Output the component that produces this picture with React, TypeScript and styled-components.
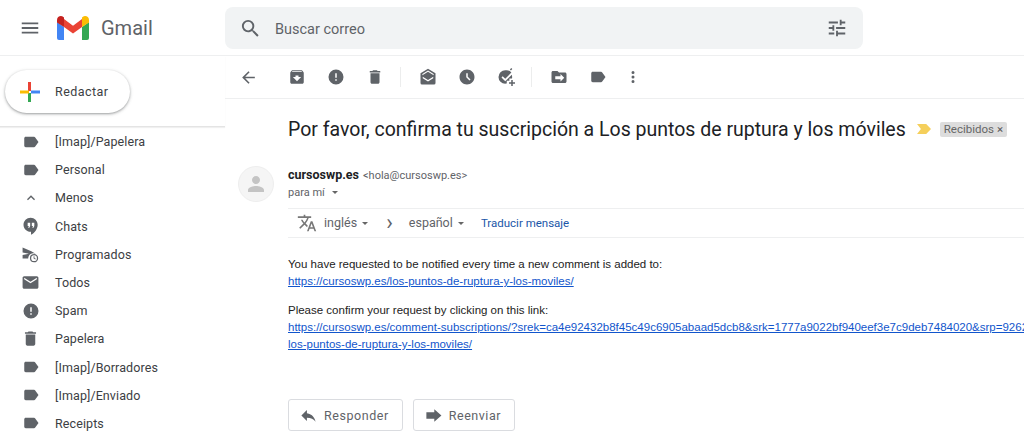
import React from 'react';
import styled, { createGlobalStyle } from 'styled-components';

const GlobalStyle = createGlobalStyle`
  html, body {
    margin: 0;
    padding: 0;
    background: #fff;
    overflow: hidden;
  }
  body {
    font-family: Roboto, "Liberation Sans", sans-serif;
  }
`;

const ICONS = {
  menu: 'M3 18h18v-2H3v2zm0-5h18v-2H3v2zm0-7v2h18V6H3z',
  search:
    'M15.5 14h-.79l-.28-.27A6.471 6.471 0 0 0 16 9.5 6.5 6.5 0 1 0 9.5 16c1.61 0 3.09-.59 4.23-1.57l.27.28v.79l5 4.99L20.49 19l-4.99-5zm-6 0C7.01 14 5 11.99 5 9.5S7.01 5 9.5 5 14 7.01 14 9.5 11.99 14 9.5 14z',
  tune: 'M3 17v2h6v-2H3zM3 5v2h10V5H3zm10 16v-2h8v-2h-8v-2h-2v6h2zM7 9v2H3v2h4v2h2V9H7zm14 4v-2H11v2h10zm-6-4h2V7h4V5h-4V3h-2v6z',
  label:
    'M17.63 5.84C17.27 5.33 16.67 5 16 5L5 5.01C3.9 5.01 3 5.9 3 7v10c0 1.1.9 1.99 2 1.99L16 19c.67 0 1.27-.33 1.63-.84L22 12l-4.37-6.16z',
  less: 'M12 8l-6 6 1.41 1.41L12 10.83l4.59 4.58L18 14z',
  chat: 'M11.5 2C6.81 2 3 5.81 3 10.5S6.81 19 11.5 19h.5v3.5c4.86-2.34 8-7.5 8-12C20 5.81 16.19 2 11.5 2zM11 12l-1 2H8.5l1-2H8V8h3v4zm5 0l-1 2h-1.5l1-2H13V8h3v4z',
  scheduled:
    'M2 3l11 5 5.5 3a6.5 6.5 0 0 0-9.4 6H2v-4.5l8-1.5-8-1.5V3zm14.5 8.5a5.2 5.2 0 1 1 0 10.4 5.2 5.2 0 0 1 0-10.4zm0 1.6a3.6 3.6 0 1 0 0 7.2 3.6 3.6 0 0 0 0-7.2zm-.6 1h1.1v2.2l1.7 1-.6.9-2.2-1.3v-2.8z',
  email:
    'M20 4H4c-1.1 0-2 .9-2 2v12c0 1.1.9 2 2 2h16c1.1 0 2-.9 2-2V6c0-1.1-.9-2-2-2zm0 4l-8 5-8-5V6l8 5 8-5v2z',
  report: 'M12 2a10 10 0 1 0 0 20 10 10 0 0 0 0-20zm1 15h-2v-2h2v2zm0-4h-2V7h2v6z',
  trash: 'M6 19c0 1.1.9 2 2 2h8c1.1 0 2-.9 2-2V7H6v12zM19 4h-3.5l-1-1h-5l-1 1H5v2h14V4z',
  back: 'M20 11H7.83l5.59-5.59L12 4l-8 8 8 8 1.41-1.41L7.83 13H20v-2z',
  archive:
    'M20.54 5.23l-1.39-1.68C18.88 3.21 18.47 3 18 3H6c-.47 0-.88.21-1.16.55L3.46 5.23C3.17 5.57 3 6.02 3 6.5V19c0 1.1.9 2 2 2h14c1.1 0 2-.9 2-2V6.5c0-.48-.17-.93-.46-1.27zM12 17.5L6.5 12H10v-2h4v2h3.5L12 17.5zM5.12 5l.81-1h12l.94 1H5.12z',
  unread:
    'M12 1L2 7v13a2 2 0 0 0 2 2h16a2 2 0 0 0 2-2V7L12 1zM12 3.4L4.5 7.9v1.7L12 5.1l7.5 4.5V7.9L12 3.4zM5 11.5v2l7 4.5 7-4.5v-2L12 16l-7-4.5z',
  clock:
    'M11.99 2C6.47 2 2 6.48 2 12s4.47 10 9.99 10C17.52 22 22 17.52 22 12S17.52 2 11.99 2zm3.3 14.71L11 12.41V7h2v4.59l3.71 3.71-1.42 1.41z',
  addTask:
    'M11 3a9 9 0 1 0 0 18c.7 0 1.4-.1 2-.2V17h3.5v-3H20c.1-.6.2-1.3.2-2 0-1-.2-2-.5-3l-8.7 8.5L6 12.6l1.6-1.6 3.4 3.3 8.2-8.3A9 9 0 0 0 11 3zm8-3l1.4 1.2-1.8 2-1.4-1.2L19 0zM19 16h2v3h3v2h-3v3h-2v-3h-3v-2h3v-3z',
  move: 'M20 6h-8l-2-2H4c-1.1 0-1.99.9-1.99 2L2 18c0 1.1.9 2 2 2h16c1.1 0 2-.9 2-2V8c0-1.1-.9-2-2-2zm-6 12v-3H7v-4h7V8l5 5-5 5z',
  translate:
    'M12.87 15.07l-2.54-2.51.03-.03c1.74-1.94 2.98-4.17 3.71-6.53H17V4h-7V2H8v2H1v1.99h11.17C11.5 7.92 10.44 9.75 9 11.35 8.07 10.32 7.3 9.19 6.69 8h-2c.73 1.63 1.73 3.17 2.98 4.56l-5.09 5.02L4 19l5-5 3.11 3.11.76-2.04zM18.5 10h-2L12 22h2l1.12-3h4.75L21 22h2l-4.5-12zm-2.62 7l1.62-4.33L19.12 17h-3.24z',
  reply: 'M10 9V5l-7 7 7 7v-4.1c5 0 8.5 1.6 11 5.1-1-5-4-10-11-11z',
  forward: 'M13 8V4l9 8-9 8v-4H3V8z',
  person:
    'M12 12c2.21 0 4-1.79 4-4s-1.79-4-4-4-4 1.79-4 4 1.79 4 4 4zm0 2c-2.67 0-8 1.34-8 4v2h16v-2c0-2.66-5.33-4-8-4z',
  dots: 'M12 8a2 2 0 1 0 0-4 2 2 0 0 0 0 4zm0 2a2 2 0 1 0 0 4 2 2 0 0 0 0-4zm0 6a2 2 0 1 0 0 4 2 2 0 0 0 0-4z',
};

type IconName = keyof typeof ICONS;

const Icon: React.FC<{ name: IconName; size?: number; color?: string; className?: string }> = ({
  name,
  size = 20,
  color = '#5f6368',
  className,
}) => (
  <svg className={className} width={size} height={size} viewBox="0 0 24 24" fill={color}>
    <path fillRule="evenodd" d={ICONS[name]} />
  </svg>
);

const MAILBOXES: Array<{ label: string; icon: IconName; size?: number }> = [
  { label: '[Imap]/Papelera', icon: 'label', size: 18 },
  { label: 'Personal', icon: 'label', size: 18 },
  { label: 'Menos', icon: 'less', size: 16 },
  { label: 'Chats', icon: 'chat', size: 20 },
  { label: 'Programados', icon: 'scheduled', size: 19 },
  { label: 'Todos', icon: 'email', size: 19 },
  { label: 'Spam', icon: 'report', size: 18 },
  { label: 'Papelera', icon: 'trash', size: 19 },
  { label: '[Imap]/Borradores', icon: 'label', size: 18 },
  { label: '[Imap]/Enviado', icon: 'label', size: 18 },
  { label: 'Receipts', icon: 'label', size: 18 },
];

const TOOL_GROUPS: IconName[][] = [
  ['archive', 'report', 'trash'],
  ['unread', 'clock', 'addTask'],
  ['move', 'label', 'dots'],
];

const App: React.FC = () => (
  <Page>
    <GlobalStyle />
    <TopBar>
      <Brand>
        <Icon name="menu" size={22} />
        <GmailMark width="32" height="24" viewBox="0 0 32 24">
          <path fill="#4285f4" d="M0 6v16a2 2 0 0 0 2 2h5V11z" />
          <path fill="#34a853" d="M25 11v13h5a2 2 0 0 0 2-2V6z" />
          <path fill="#ea4335" d="M7 11V3l9 6.8L25 3v8l-9 6.6z" />
          <path fill="#c5221f" d="M0 6.5V4c0-3.4 3.8-5 6.4-3L7 1.5V11z" />
          <path fill="#fbbc04" d="M25 1.5l.6-.5C28.2-1 32 .6 32 4v2.5L25 11z" />
        </GmailMark>
        <GmailName>Gmail</GmailName>
      </Brand>
      <SearchBox>
        <Icon name="search" size={23} />
        <SearchText>Buscar correo</SearchText>
        <Icon name="tune" size={22} />
      </SearchBox>
    </TopBar>
    <Body>
      <Sidebar>
        <ComposeArea>
          <ComposeButton>
            <svg width="24" height="24" viewBox="0 0 24 24">
              <path fill="#ea4335" d="M10 2h3v9h-3z" />
              <path fill="#4285f4" d="M13 10.5h9v3h-9z" />
              <path fill="#34a853" d="M10 13h3v9h-3z" />
              <path fill="#fbbc04" d="M2 10.5h9v3H2z" />
            </svg>
            Redactar
          </ComposeButton>
        </ComposeArea>
        <MailboxList>
          {MAILBOXES.map(box => (
            <MailboxRow key={box.label}>
              <MailboxIcon>
                <Icon name={box.icon} size={box.size} />
              </MailboxIcon>
              <MailboxName>{box.label}</MailboxName>
            </MailboxRow>
          ))}
        </MailboxList>
      </Sidebar>
      <Content>
        <Toolbar>
          <BackSlot>
            <Icon name="back" size={19} />
          </BackSlot>
          {TOOL_GROUPS.map((group, i) => (
            <ToolGroup key={i} $last={i === TOOL_GROUPS.length - 1}>
              {group.map(name => (
                <ToolSlot key={name}>
                  <Icon name={name} size={18} />
                </ToolSlot>
              ))}
            </ToolGroup>
          ))}
        </Toolbar>
        <SubjectRow>
          <Subject>Por favor, confirma tu suscripción a Los puntos de ruptura y los móviles</Subject>
          <ImportantMark width="14" height="10" viewBox="0 0 16 10" preserveAspectRatio="none">
            <path fill="#f5cf5b" d="M0 0h10.5L16 5l-5.5 5H0l4.5-5z" />
          </ImportantMark>
          <InboxChip>
            Recibidos <ChipClose>×</ChipClose>
          </InboxChip>
        </SubjectRow>
        <Message>
          <Avatar>
            <Icon name="person" size={24} color="#c4c4c4" />
          </Avatar>
          <MessageBody>
            <SenderLine>
              <SenderName>cursoswp.es</SenderName>
              <SenderMail>&lt;hola@cursoswp.es&gt;</SenderMail>
            </SenderLine>
            <ToLine>
              para mí <Caret />
            </ToLine>
            <TranslateBar>
              <Icon name="translate" size={20} color="#777" />
              <Lang>
                inglés <Caret />
              </Lang>
              <Chevron>›</Chevron>
              <Lang>
                español <Caret />
              </Lang>
              <TranslateLink>Traducir mensaje</TranslateLink>
            </TranslateBar>
            <Mail>
              <MailBlock>
                <MailLine>You have requested to be notified every time a new comment is added to:</MailLine>
                <MailLink>https://cursoswp.es/los-puntos-de-ruptura-y-los-moviles/</MailLink>
              </MailBlock>
              <MailBlock>
                <MailLine>Please confirm your request by clicking on this link:</MailLine>
                <MailLink>
                  https://cursoswp.es/comment-subscriptions/?srek=ca4e92432b8f45c49c6905abaad5dcb8&amp;srk=1777a9022bf940eef3e7c9deb7484020&amp;srp=9262
                </MailLink>
                <MailLink>los-puntos-de-ruptura-y-los-moviles/</MailLink>
              </MailBlock>
            </Mail>
            <Actions>
              <ActionButton>
                <Icon name="reply" size={19} />
                Responder
              </ActionButton>
              <ActionButton>
                <Icon name="forward" size={19} />
                Reenviar
              </ActionButton>
            </Actions>
          </MessageBody>
        </Message>
      </Content>
    </Body>
  </Page>
);

export default App;

const Page = styled.div`
  width: 1024px;
  height: 442px;
  overflow: hidden;
  display: flex;
  flex-direction: column;
  background: #fff;
`;

const TopBar = styled.header`
  flex: none;
  height: 56px;
  box-sizing: border-box;
  display: flex;
  align-items: flex-start;
  border-bottom: 1px solid #eeeff0;
`;

const Brand = styled.div`
  width: 225px;
  height: 55px;
  display: flex;
  align-items: center;
  padding-left: 19px;
  box-sizing: border-box;
`;

const GmailMark = styled.svg`
  margin-left: 16px;
`;

const GmailName = styled.span`
  margin-left: 12px;
  font-size: 20px;
  color: #5f6368;
`;

const SearchBox = styled.div`
  margin-top: 7px;
  width: 638px;
  height: 42px;
  box-sizing: border-box;
  display: flex;
  align-items: center;
  padding: 0 15px 0 14px;
  border-radius: 8px;
  background: #f1f3f4;
`;

const SearchText = styled.span`
  margin-left: 13px;
  margin-top: 2px;
  flex: 1;
  font-size: 14.5px;
  color: #5f6368;
`;

const Body = styled.div`
  flex: 1;
  display: flex;
  min-height: 0;
`;

const Sidebar = styled.nav`
  flex: none;
  width: 225px;
`;

const ComposeArea = styled.div`
  height: 71px;
  box-sizing: border-box;
  padding: 14px 0 0 5px;
  border-bottom: 1px solid #e4e4e4;
  box-shadow: 0 1px 1px rgba(0, 0, 0, 0.06);
`;

const ComposeButton = styled.div`
  width: 125px;
  height: 43px;
  box-sizing: border-box;
  display: flex;
  align-items: center;
  gap: 13px;
  padding-left: 13px;
  border-radius: 22px;
  background: #fff;
  font-size: 12.5px;
  letter-spacing: 0.45px;
  color: #3c4043;
  box-shadow: 0 1px 2px rgba(60, 64, 67, 0.35), 0 1px 3px 1px rgba(60, 64, 67, 0.15);
`;

const MailboxList = styled.div`
  margin-top: 0.5px;
`;

const MailboxRow = styled.div`
  height: 28.2px;
  display: flex;
  align-items: center;
  color: #3c4043;
`;

const MailboxIcon = styled.span`
  width: 55px;
  flex: none;
  display: flex;
  justify-content: center;
  box-sizing: border-box;
  padding-left: 6px;
`;

const MailboxName = styled.span`
  font-size: 12.5px;
  letter-spacing: 0.1px;
`;

const Content = styled.main`
  flex: 1;
  min-width: 0;
`;

const Toolbar = styled.div`
  height: 43px;
  box-sizing: border-box;
  display: flex;
  align-items: center;
  border-bottom: 1px solid #eeeff0;
  padding-left: 14px;
`;

const BackSlot = styled.span`
  width: 19px;
  display: flex;
  margin-right: 19px;
`;

const ToolGroup = styled.div<{ $last: boolean }>`
  display: flex;
  align-items: center;
  height: 20px;
  padding-right: 6px;
  margin-right: 7px;
  border-right: ${({ $last }) => ($last ? 'none' : '1px solid #eceded')};

  ${({ $last }) => ($last ? '& > :last-child { margin-left: -4px; }' : '')}
`;

const ToolSlot = styled.span`
  width: 39px;
  display: flex;
  justify-content: center;
`;

const SubjectRow = styled.div`
  display: flex;
  align-items: center;
  height: 60px;
  padding-left: 63px;
`;

const Subject = styled.h1`
  margin: 0;
  font-size: 19.5px;
  font-weight: 400;
  color: #202124;
  white-space: nowrap;
`;

const ImportantMark = styled.svg`
  margin-left: 11px;
`;

const InboxChip = styled.span`
  margin-left: 9px;
  padding: 0 4px;
  height: 15px;
  line-height: 15px;
  border-radius: 2px;
  background: #ddd;
  color: #666;
  font-size: 11.5px;
  white-space: nowrap;
`;

const ChipClose = styled.span`
  color: #555;
`;

const Message = styled.section`
  display: flex;
  padding: 7px 0 0 13px;
`;

const Avatar = styled.div`
  flex: none;
  width: 36px;
  height: 36px;
  border-radius: 50%;
  background: #f5f5f5;
  border: 1px solid #eee;
  box-sizing: border-box;
  display: flex;
  align-items: center;
  justify-content: center;
`;

const MessageBody = styled.div`
  flex: none;
  width: 736px;
  margin-left: 14px;
  margin-top: 1px;
`;

const SenderLine = styled.div`
  display: flex;
  align-items: baseline;
  gap: 4px;
  height: 17px;
`;

const SenderName = styled.span`
  font-size: 12.5px;
  font-weight: 700;
  color: #202124;
`;

const SenderMail = styled.span`
  font-size: 11px;
  color: #5f6368;
`;

const ToLine = styled.div`
  display: flex;
  align-items: center;
  gap: 5px;
  height: 17px;
  font-size: 11px;
  color: #5f6368;
`;

const Caret = styled.i`
  display: inline-block;
  width: 0;
  height: 0;
  margin-left: 2px;
  vertical-align: middle;
  border-left: 3.5px solid transparent;
  border-right: 3.5px solid transparent;
  border-top: 3.5px solid #666;
`;

const TranslateBar = styled.div`
  margin-top: 7px;
  height: 30px;
  box-sizing: border-box;
  display: flex;
  align-items: center;
  padding-left: 9px;
  border-top: 1px solid #eeeff0;
  border-bottom: 1px solid #eeeff0;
`;

const Lang = styled.span`
  margin-left: 7px;
  margin-bottom: 2px;
  font-size: 12.5px;
  color: #5f6368;
`;

const Chevron = styled.span`
  margin-left: 18px;
  margin-right: 9px;
  font-size: 22px;
  line-height: 18px;
  color: #5f6368;
`;

const TranslateLink = styled.span`
  margin-left: 17px;
  font-size: 11.5px;
  color: #1a56a8;
`;

const Mail = styled.div`
  padding-top: 18px;
  font-family: 'Liberation Sans', Arial, sans-serif;
  font-size: 11.5px;
  line-height: 17px;
  color: #222;
`;

const MailBlock = styled.div`
  margin-bottom: 12px;
`;

const MailLine = styled.div`
  white-space: nowrap;
`;

const MailLink = styled.div`
  white-space: nowrap;
  color: #1155cc;
  text-decoration: underline;
`;

const Actions = styled.div`
  display: flex;
  gap: 10px;
  margin-top: 46px;
`;

const ActionButton = styled.div`
  height: 32px;
  box-sizing: border-box;
  display: flex;
  align-items: center;
  gap: 6px;
  padding: 0 13px 0 10px;
  border: 1px solid #dadce0;
  border-radius: 3px;
  font-size: 12.5px;
  letter-spacing: 0.55px;
  color: #5f6368;
`;
